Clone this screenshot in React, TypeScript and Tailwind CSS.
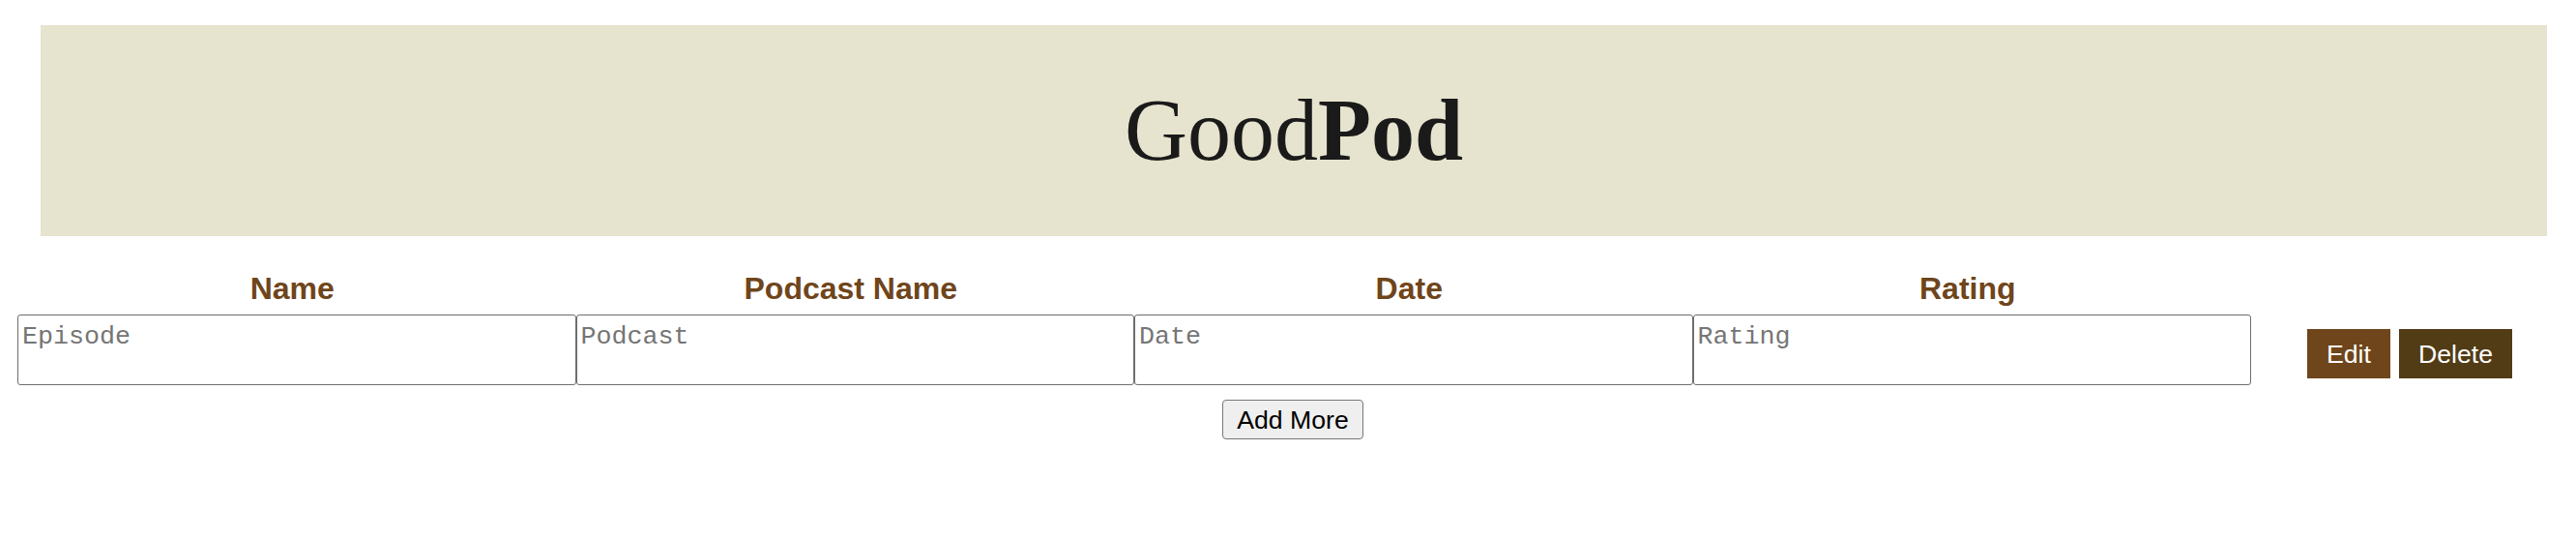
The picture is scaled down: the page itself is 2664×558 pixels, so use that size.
import { useState } from 'react';

interface episodeRow {
  id: number;
}

const columns = ['Name', 'Podcast Name', 'Date', 'Rating'];
const placeholders = ['Episode', 'Podcast', 'Date', 'Rating'];

export default function App() {
  const [rows, setRows] = useState<episodeRow[]>([{ id: 1 }]);

  return (
    <main className="w-full min-h-[558px] bg-white pt-[26px] font-['Liberation_Sans',Arial,sans-serif]">
      <header className="ml-[42px] mr-[30px] h-[218px] bg-[#e6e3ce] flex items-center justify-center">
        <h1 className="text-[90px] leading-none text-[#1a1a1a] font-['Liberation_Serif','Times_New_Roman',serif] font-normal">
          Good<span className="font-bold">Pod</span>
        </h1>
      </header>

      <section className="ml-[18px] mr-[8px] mt-[36px]">
        <div className="grid grid-cols-[577.5px_577.5px_577.5px_577.5px_1fr]">
          {columns.map((col) => (
            <div key={col} className="pr-[9px] text-center text-[32px] font-bold text-[#6f451b] leading-[37px]">
              {col}
            </div>
          ))}
          <div></div>
        </div>

        {rows.map((row) => (
          <div key={row.id} className="mt-[8px] grid grid-cols-[577.5px_577.5px_577.5px_577.5px_1fr]">
            {placeholders.map((ph) => (
              <textarea
                key={ph}
                placeholder={ph}
                className="h-[73px] w-full resize-none border border-[#6e6e6e] rounded-[3px] px-[4px] pt-[7px] pb-[4px] text-[26.67px] leading-[30px] font-['Liberation_Mono','Courier_New',monospace] placeholder:text-[#757575] outline-none"
              />
            ))}
            <div className="flex items-center justify-center gap-[9px] pt-[8px]">
              <button className="h-[51px] px-[20px] bg-[#6f451b] text-white text-[26.67px]">Edit</button>
              <button
                className="h-[51px] px-[20px] bg-[#523c16] text-white text-[26.67px]"
                onClick={() => setRows((prev) => (prev.length > 1 ? prev.filter((r) => r.id !== row.id) : prev))}
              >
                Delete
              </button>
            </div>
          </div>
        ))}

        <div className="mt-[15px] flex justify-center">
          <button
            className="h-[41px] px-[14px] bg-[#efefef] border border-[#767676] rounded-[4px] text-[26.67px] text-black"
            onClick={() => setRows((prev) => [...prev, { id: prev.length + 1 }])}
          >
            Add More
          </button>
        </div>
      </section>
    </main>
  );
}
